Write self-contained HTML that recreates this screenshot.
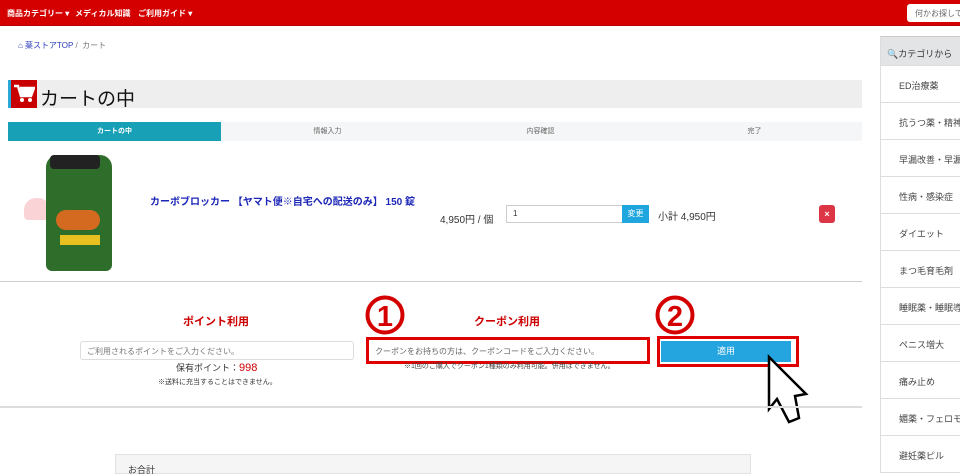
<!DOCTYPE html>
<html><head><meta charset="utf-8"><style>
*{box-sizing:border-box;margin:0;padding:0}
body{width:960px;height:469px;overflow:hidden;background:#fff;font-family:"Liberation Sans","Noto Sans CJK JP",sans-serif;position:relative;color:#333}
.a{position:absolute}
.hdr{left:0;top:0;width:960px;height:26px;background:#d40000;border-bottom:1px solid #b00}
.nav{color:#fff;font-size:8px;font-weight:bold;top:8px}
.side div{position:absolute;left:880px;width:80px;height:37px;border-bottom:1px solid #ddd;border-left:1px solid #ddd;font-size:9px;color:#444;padding:13px 0 0 18px;white-space:nowrap;overflow:hidden}
</style></head><body>
<div class="a hdr"></div>
<div class="a nav" style="left:7px">商品カテゴリー ▾</div>
<div class="a nav" style="left:75px">メディカル知識</div>
<div class="a nav" style="left:138px">ご利用ガイド ▾</div>
<div class="a" style="left:907px;top:4px;width:60px;height:18px;background:#fff;border-radius:3px;font-size:8px;color:#666;padding:4px 0 0 8px;white-space:nowrap">何かお探しで</div>

<div class="a" style="left:18px;top:40px;font-size:8px;color:#2a3bb8">&#8962; 薬ストアTOP <span style="color:#777">/ &nbsp;カート</span></div>

<div class="a" style="left:8px;top:80px;width:854px;height:28px;background:#eee"></div>
<div class="a" style="left:8px;top:80px;width:3px;height:28px;background:#2aa8d8"></div>
<div class="a" style="left:11px;top:80px;width:26px;height:28px;background:#c80000"></div>
<svg class="a" style="left:13px;top:84px" width="22" height="20" viewBox="0 0 22 20"><path d="M1 2h4l3 10h10l3-8H7" fill="none" stroke="#fff" stroke-width="2.5"/><path d="M7 4h14l-3 8H9z" fill="#fff"/><circle cx="9" cy="16" r="2" fill="#fff"/><circle cx="17" cy="16" r="2" fill="#fff"/></svg>
<div class="a" style="left:40px;top:84px;font-size:19px;color:#111">カートの中</div>

<div class="a" style="left:8px;top:122px;width:854px;height:19px;background:#f5f6f7"></div>
<div class="a" style="left:8px;top:122px;width:213px;height:19px;background:#17a0b6;color:#fff;font-size:7px;font-weight:bold;text-align:center;line-height:19px">カートの中</div>
<div class="a" style="left:221px;top:122px;width:213px;height:19px;font-size:7px;color:#666;text-align:center;line-height:19px">情報入力</div>
<div class="a" style="left:434px;top:122px;width:213px;height:19px;font-size:7px;color:#666;text-align:center;line-height:19px">内容確認</div>
<div class="a" style="left:647px;top:122px;width:215px;height:19px;font-size:7px;color:#666;text-align:center;line-height:19px">完了</div>

<div class="a" style="left:24px;top:198px;width:26px;height:22px;background:#f7c8cc;border-radius:12px 12px 4px 4px;opacity:.8"></div>
<div class="a" style="left:46px;top:155px;width:66px;height:116px;background:#2f6e2a;border-radius:12px 12px 6px 6px"></div>
<div class="a" style="left:50px;top:155px;width:50px;height:14px;background:#222;border-radius:4px"></div>
<div class="a" style="left:56px;top:210px;width:44px;height:20px;background:#d46a20;border-radius:10px"></div>
<div class="a" style="left:60px;top:235px;width:40px;height:10px;background:#e8c020"></div>
<div class="a" style="left:150px;top:193px;font-size:10px;font-weight:bold;color:#1e28b8">カーボブロッカー 【ヤマト便※自宅への配送のみ】 150 錠</div>
<div class="a" style="left:440px;top:211px;font-size:10px;color:#333">4,950円 / 個</div>
<div class="a" style="left:506px;top:205px;width:117px;height:18px;border:1px solid #ccc;font-size:8px;padding:3px 0 0 6px">1</div>
<div class="a" style="left:622px;top:205px;width:27px;height:18px;background:#1fa6de;color:#fff;font-size:8px;text-align:center;line-height:18px">変更</div>
<div class="a" style="left:658px;top:208px;font-size:10px;color:#333">小計 4,950円</div>
<div class="a" style="left:819px;top:205px;width:16px;height:18px;background:#dc3545;border-radius:3px;color:#fff;font-size:9px;text-align:center;line-height:18px;font-weight:bold">×</div>

<div class="a" style="left:0;top:281px;width:862px;height:1px;background:#ccc"></div>

<div class="a" style="left:183px;top:313px;font-size:11px;font-weight:bold;color:#c00">ポイント利用</div>
<div class="a" style="left:80px;top:341px;width:274px;height:19px;border:1px solid #ddd;border-radius:3px;font-size:8px;color:#777;padding:4px 0 0 6px">ご利用されるポイントをご入力ください。</div>
<div class="a" style="left:176px;top:361px;font-size:9px;color:#333">保有ポイント：<span style="color:#c00;font-size:11px">998</span></div>
<div class="a" style="left:158px;top:377px;font-size:7px;color:#333">※送料に充当することはできません。</div>

<svg class="a" style="left:0;top:0" width="960" height="469">
<circle cx="385" cy="315" r="17.5" fill="none" stroke="#d40000" stroke-width="4"/>
<text x="385" y="326" text-anchor="middle" font-family="Liberation Sans" font-weight="bold" font-size="29" fill="#d40000">1</text>
<circle cx="675" cy="315" r="17.5" fill="none" stroke="#d40000" stroke-width="4"/>
<text x="675" y="326" text-anchor="middle" font-family="Liberation Sans" font-weight="bold" font-size="29" fill="#d40000">2</text>
</svg>
<div class="a" style="left:474px;top:313px;font-size:11px;font-weight:bold;color:#c00">クーポン利用</div>
<div class="a" style="left:366px;top:337px;width:284px;height:27px;border:3px solid #e00000;background:#fff;font-size:8px;color:#666;padding:6px 0 0 6px">クーポンをお持ちの方は、クーポンコードをご入力ください。</div>
<div class="a" style="left:404px;top:361px;font-size:7px;color:#444">※1回のご購入でクーポン1種類のみ利用可能。併用はできません。</div>

<div class="a" style="left:657px;top:336px;width:142px;height:31px;border:3px solid #e00000;background:#fff"></div>
<div class="a" style="left:661px;top:341px;width:130px;height:21px;background:#25a5e0;color:#fff;font-size:9px;text-align:center;line-height:21px">適用</div>
<svg class="a" style="left:0;top:0" width="960" height="469"><polygon points="769,357 769,409 777,399 789,422 799,418 795,396 806,394" fill="#fff" stroke="#000" stroke-width="2.5"/></svg>

<div class="a" style="left:0;top:406px;width:862px;height:2px;background:#ddd"></div>
<div class="a" style="left:115px;top:454px;width:636px;height:20px;background:#f5f5f5;border:1px solid #e2e2e2;font-size:9px;padding:8px 0 0 12px">お合計</div>

<div class="side">
<div style="top:36px;height:30px;background:#e3e4e5;padding:10px 0 0 6px;color:#333;border-top:1px solid #ccc">&#128269;カテゴリから</div>
<div style="top:66px">ED治療薬</div>
<div style="top:103px">抗うつ薬・精神</div>
<div style="top:140px">早漏改善・早漏</div>
<div style="top:177px">性病・感染症</div>
<div style="top:214px">ダイエット</div>
<div style="top:251px">まつ毛育毛剤</div>
<div style="top:288px">睡眠薬・睡眠導</div>
<div style="top:325px">ペニス増大</div>
<div style="top:362px">痛み止め</div>
<div style="top:399px">媚薬・フェロモ</div>
<div style="top:436px">避妊薬ピル</div>
</div>
</body></html>
